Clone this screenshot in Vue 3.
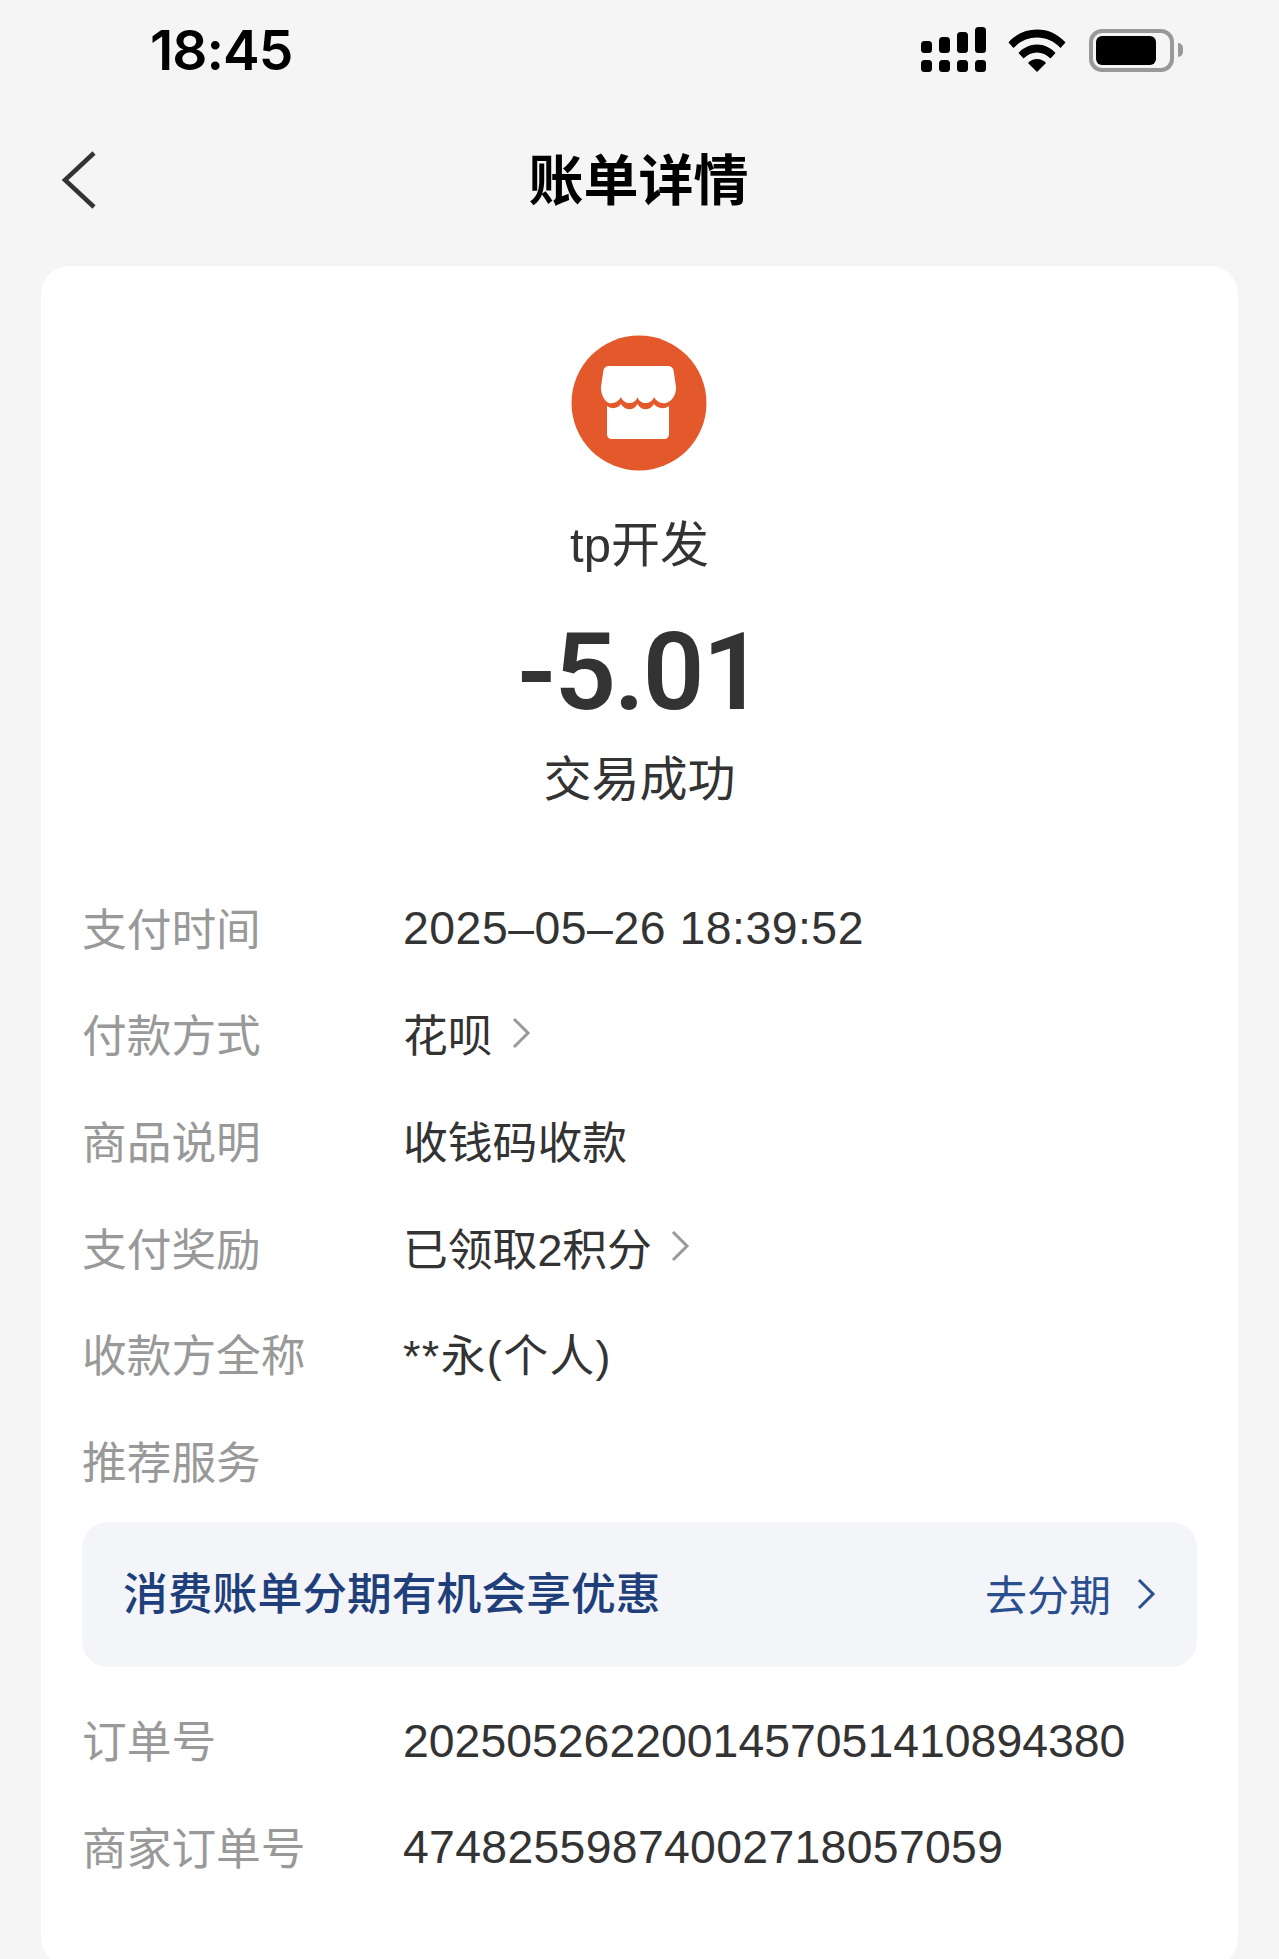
<template>
  <div class="page">
    <div class="status-bar">
      <span class="time">18:45</span>
      <div class="status-icons">
        <svg class="signal" width="66" height="46" viewBox="0 0 66 46">
          <rect x="0" y="14" width="11" height="12" rx="3.500" />
          <rect x="18" y="10" width="11" height="16" rx="3.500" />
          <rect x="36" y="5" width="11" height="21" rx="3.500" />
          <rect x="54" y="0" width="11" height="26" rx="3.500" />
          <rect x="0" y="33" width="11" height="12" rx="3.500" />
          <rect x="18" y="33" width="11" height="12" rx="3.500" />
          <rect x="36" y="33" width="11" height="12" rx="3.500" />
          <rect x="54" y="33" width="11" height="12" rx="3.500" />
        </svg>
        <svg class="wifi" width="58" height="44" viewBox="0 0 58 44">
          <path d="M0.500 14.500C8 6 18 1.500 29 1.500S50 6 57.500 14.500L52.500 20C46 13 38 9.500 29 9.500S12 13 5.500 20Z" />
          <path d="M10.500 25C15.500 19.500 22 16.500 29 16.500S42.500 19.500 47.500 25L42.500 30.500C38.500 26.500 34 24.500 29 24.500S19.500 26.500 15.500 30.500Z" />
          <path d="M20 35C22.500 32.500 25.500 31 29 31S35.500 32.500 38 35L29 44Z" />
        </svg>
        <div class="battery">
          <div class="battery-level"></div>
        </div>
        <div class="battery-nub"></div>
      </div>
    </div>

    <div class="nav-bar">
      <svg class="back" width="36" height="58" viewBox="0 0 36 58">
        <path d="M33 2L4 29L33 56" />
      </svg>
      <span class="nav-title">账单详情</span>
    </div>

    <div class="card">
      <div class="merchant">
        <svg class="logo" width="136" height="136" viewBox="0 0 136 136">
          <circle cx="68" cy="68" r="67.500" fill="#e4592b" />
          <path
            fill="#fff"
            d="M38 31H97C100 31 102 33 102.500 35L105 52C105.500 58 102 66 95 68C90 69 85 66 83 62C80 70 69 70 66.500 62C64 70 53 70 50 62C48 66 43 69 38 68C33 66 29.500 58 30 52L32.500 35C33 33 35 31 38 31Z"
          />
          <path
            fill="#fff"
            d="M36 71C42 75 47 73 50 69C54 76 63 76 66.500 69C70 76 79 76 83 69C86 73 92 75 98 71V99C98 102 96 104 93 104H41C38 104 36 102 36 99Z"
          />
        </svg>
        <div class="merchant-name">tp开发</div>
        <div class="amount">-5.01</div>
        <div class="trade-status">交易成功</div>
      </div>

      <div class="rows first">
        <div v-for="row in topRows" :key="row.label" class="row">
          <span class="label">{{ row.label }}</span>
          <span class="value" :class="row.kind">{{ row.value }}</span>
          <svg v-if="row.arrow" class="arrow" width="20" height="34" viewBox="0 0 20 34">
            <path d="M3 3L17 17L3 31" />
          </svg>
        </div>
      </div>

      <div class="promo">
        <span class="promo-text">消费账单分期有机会享优惠</span>
        <span class="promo-action">去分期</span>
        <svg class="promo-arrow" width="20" height="34" viewBox="0 0 20 34">
          <path d="M3 3L17 17L3 31" />
        </svg>
      </div>

      <div class="rows">
        <div v-for="row in bottomRows" :key="row.label" class="row">
          <span class="label">{{ row.label }}</span>
          <span class="value numeric" :class="row.kind">{{ row.value }}</span>
        </div>
      </div>
    </div>
  </div>
</template>

<script setup>
const topRows = [
  { label: '支付时间', value: '2025–05–26 18:39:52', kind: 'numeric date' },
  { label: '付款方式', value: '花呗', arrow: true },
  { label: '商品说明', value: '收钱码收款' },
  { label: '支付奖励', value: '已领取2积分', arrow: true },
  { label: '收款方全称', value: '**永(个人)', kind: 'spaced' },
  { label: '推荐服务', value: '' },
]

const bottomRows = [
  { label: '订单号', value: '2025052622001457051410894380' },
  { label: '商家订单号', value: '47482559874002718057059', kind: 'loose' },
]
</script>

<style>
html,
body {
  margin: 0;
  background: #f5f5f5;
}
</style>

<style scoped>
.page {
  height: 1959px;
  overflow: hidden;
  background: #f5f5f5;
  font-family: "Liberation Sans", "Noto Sans CJK SC", sans-serif;
  color: #333;
}

.status-bar {
  display: flex;
  align-items: center;
  justify-content: space-between;
  height: 100px;
  padding: 0 96px 0 150px;
}

.time {
  font-family: Inter, sans-serif;
  font-size: 55px;
  font-weight: 600;
  line-height: 102px;
  color: #000;
  letter-spacing: -1px;
}

.status-icons {
  display: flex;
  align-items: center;
}

.signal {
  fill: #000;
  margin-right: 21px;
}

.wifi {
  fill: #000;
  margin-right: 23px;
}

.battery {
  box-sizing: border-box;
  width: 85px;
  height: 43px;
  padding: 3px 14px 3px 3px;
  border: 4px solid #999;
  border-radius: 13px;
}

.battery-level {
  height: 100%;
  background: #000;
  border-radius: 6px;
}

.battery-nub {
  width: 5px;
  height: 14px;
  margin-left: 4px;
  background: #999;
  border-radius: 0 7px 7px 0;
}

.nav-bar {
  display: flex;
  align-items: center;
  justify-content: center;
  position: relative;
  height: 152px;
  padding-bottom: 8px;
  margin-bottom: 6px;
}

.back {
  position: absolute;
  left: 61px;
  top: 51px;
  fill: none;
  stroke: #333;
  stroke-width: 4.500;
}

.nav-title {
  margin-right: 2px;
  font-size: 55px;
  font-weight: 700;
  color: #000;
}

.card {
  height: 1700px;
  margin: 0 41px;
  padding: 0 41px;
  background: #fff;
  border-radius: 28px;
}

.merchant {
  display: flex;
  flex-direction: column;
  align-items: center;
  padding-top: 69px;
}

.logo {
  display: block;
  margin-right: 2px;
}

.merchant-name {
  margin-top: 44px;
  font-size: 49px;
  line-height: 60px;
}

.amount {
  margin-top: 32px;
  font-family: Roboto, sans-serif;
  font-size: 108px;
  font-weight: 600;
  line-height: 130px;
  letter-spacing: -2px;
  color: #333;
}

.trade-status {
  margin-top: 13px;
  font-size: 48px;
  line-height: 60px;
}

.rows {
  display: flex;
  flex-direction: column;
}

.rows.first {
  margin-top: 63px;
}

.row {
  display: flex;
  align-items: center;
  height: 106.600px;
}

.label {
  flex: none;
  width: 321px;
  font-size: 44.700px;
  color: #999;
}

.value {
  font-size: 44.800px;
  color: #333;
}

.value.numeric {
  padding-top: 4px;
  font-size: 46.400px;
}

.value.date {
  letter-spacing: 0.500px;
}

.value.loose {
  letter-spacing: 0.300px;
}

.value.spaced {
  letter-spacing: 1.400px;
}

.arrow {
  margin-left: 18px;
  fill: none;
  stroke: #999;
  stroke-width: 3;
}

.promo {
  display: flex;
  align-items: center;
  height: 145px;
  margin: 9px 0 19px;
  padding: 0 41px;
  background: #f3f5f9;
  border-radius: 26px;
}

.promo-text {
  flex: 1;
  padding-bottom: 8px;
  font-size: 44.800px;
  font-weight: 500;
  color: #1f3f7a;
}

.promo-action {
  padding-bottom: 4px;
  font-size: 42px;
  color: #2a4f8f;
}

.promo-arrow {
  margin-left: 25px;
  fill: none;
  stroke: #2a4f8f;
  stroke-width: 3;
}
</style>
